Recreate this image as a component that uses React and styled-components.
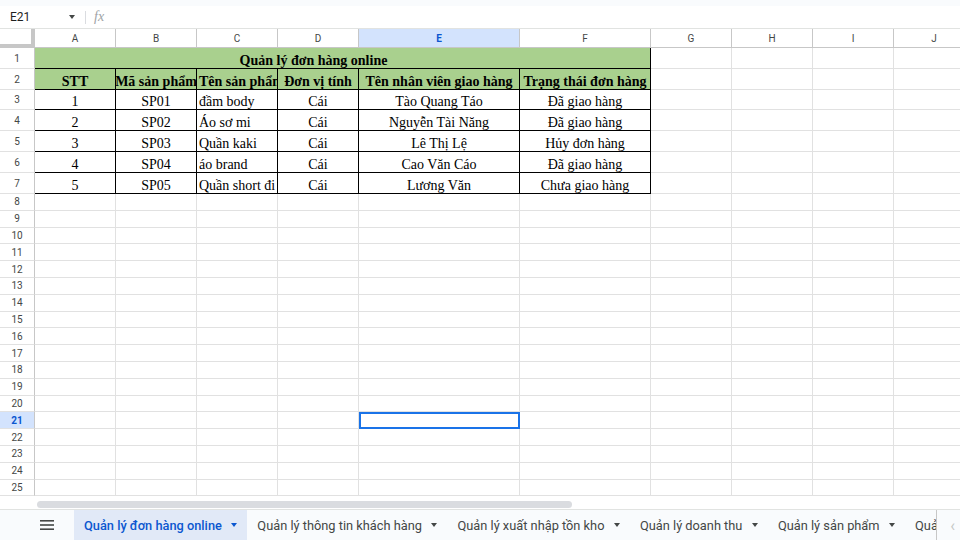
import React from "react";
import styled, { createGlobalStyle } from "styled-components";

const GlobalStyle = createGlobalStyle`
    html, body {
        margin: 0;
        padding: 0;
        background: #fff;
        font-family: Roboto, "Liberation Sans", Arial, sans-serif;
    }
`;

const Page = styled.div`
    width: 960px;
    height: 540px;
    overflow: hidden;
    display: flex;
    flex-direction: column;
    background: #fff;
`;

const TopStrip = styled.div`
    height: 6px;
    background: #f9fbfd;
`;

const FormulaBar = styled.div`
    height: 22px;
    display: flex;
    align-items: center;
    border-bottom: 1px solid #e1e3e1;
`;

const NameBox = styled.div`
    width: 85px;
    box-sizing: border-box;
    padding: 0 10px;
    display: flex;
    align-items: center;
    justify-content: space-between;
    font-size: 12px;
    color: #1f1f1f;
`;

const Caret = styled.span`
    width: 0;
    height: 0;
    border-left: 3.5px solid transparent;
    border-right: 3.5px solid transparent;
    border-top: 4px solid ${(p) => p.color || "#444746"};
    margin-left: ${(p) => p.gap || 0}px;
`;

const Divider = styled.div`
    width: 1px;
    height: 13px;
    background: #dadce0;
`;

const Fx = styled.span`
    margin-left: 8px;
    font-family: "Liberation Serif", serif;
    font-style: italic;
    font-size: 14px;
    color: #a0a3a6;
`;

const Sheet = styled.div`
    display: grid;
    grid-template-columns: 35px 81px 81px 81px 81px 161px 131px 81px 81px 81px 81px;
    grid-template-rows: 19px 21px 21px 20px 21px 21px 21px 21px repeat(18, 16.8px);
    height: 467.4px;
    overflow: hidden;
`;

const Corner = styled.div`
    box-sizing: border-box;
    background: #fff;
    border-right: 4px solid #c7c7c7;
    border-bottom: 4px solid #c7c7c7;
`;

const ColHead = styled.div`
    box-sizing: border-box;
    display: flex;
    align-items: center;
    justify-content: center;
    font-size: 10px;
    color: ${(p) => (p.active ? "#0b57d0" : "#444746")};
    font-weight: ${(p) => (p.active ? 700 : 400)};
    background: ${(p) => (p.active ? "#d3e3fd" : "#fff")};
    border-right: 1px solid #c7c7c7;
    border-bottom: 1px solid #c7c7c7;
`;

const RowHead = styled.div`
    box-sizing: border-box;
    display: flex;
    align-items: center;
    justify-content: center;
    font-size: 10px;
    color: ${(p) => (p.active ? "#0b57d0" : "#444746")};
    font-weight: ${(p) => (p.active ? 700 : 400)};
    background: ${(p) => (p.active ? "#d3e3fd" : "#fff")};
    border-right: 1px solid #c7c7c7;
    border-bottom: 1px solid #e1e1e1;
`;

const Cell = styled.div`
    box-sizing: border-box;
    display: flex;
    align-items: flex-end;
    justify-content: ${(p) => (p.align === "left" ? "flex-start" : "center")};
    padding: 0 ${(p) => (p.shift ? p.shift + 2 : 2)}px 0 2px;
    overflow: hidden;
    white-space: nowrap;
    font-family: "Liberation Serif", "Times New Roman", serif;
    font-size: 14px;
    line-height: 15px;
    font-weight: ${(p) => (p.bold ? 700 : 400)};
    color: #000;
    background: ${(p) => (p.green ? "#a9d08e" : "#fff")};
    grid-column: ${(p) => (p.span ? `span ${p.span}` : "auto")};
    border-right: 1px solid ${(p) => (p.table ? "#000" : "#e1e1e1")};
    border-bottom: 1px solid ${(p) => (p.table ? "#000" : "#e1e1e1")};
    outline: ${(p) => (p.selected ? "2px solid #1a73e8" : "none")};
    outline-offset: -2px;
`;

const ScrollTrack = styled.div`
    height: 14px;
    box-sizing: border-box;
    padding: 5px 0 0 37px;
    border-bottom: 1px solid #e1e3e1;
`;

const ScrollThumb = styled.div`
    width: 535px;
    height: 7px;
    border-radius: 4px;
    background: #dadce0;
`;

const TabBar = styled.div`
    flex: 1;
    display: flex;
    align-items: stretch;
    background: #f9fbfd;
`;

const Menu = styled.div`
    width: 74px;
    display: flex;
    align-items: center;
    justify-content: center;
    padding-left: 20px;
    box-sizing: border-box;
`;

const TabList = styled.div`
    width: 862px;
    display: flex;
    overflow: hidden;
    border-right: 1px solid #c7c7c7;
`;

const Tab = styled.div`
    flex: none;
    display: flex;
    align-items: center;
    padding: 0 10px;
    font-size: 12.8px;
    font-weight: ${(p) => (p.active ? 500 : 400)};
    color: ${(p) => (p.active ? "#0b57d0" : "#444746")};
    background: ${(p) => (p.active ? "#e1e9f7" : "transparent")};
    white-space: nowrap;
`;

const NavArrow = styled.div`
    flex: 1;
    display: flex;
    align-items: center;
    justify-content: flex-end;
    padding-right: 5px;
    color: #c4c7c5;
    font-size: 16px;
`;

const cols = ["A", "B", "C", "D", "E", "F", "G", "H", "I", "J"];

const header = ["STT", "Mã sản phẩm", "Tên sản phẩm", "Đơn vị tính", "Tên nhân viên giao hàng", "Trạng thái đơn hàng"];

const data = [
    ["1", "SP01", "đầm body", "Cái", "Tào Quang Táo", "Đã giao hàng"],
    ["2", "SP02", "Áo sơ mi", "Cái", "Nguyễn Tài Năng", "Đã giao hàng"],
    ["3", "SP03", "Quần kaki", "Cái", "Lê Thị Lệ", "Hủy đơn hàng"],
    ["4", "SP04", "áo brand", "Cái", "Cao Văn Cáo", "Đã giao hàng"],
    ["5", "SP05", "Quần short đi", "Cái", "Lương Văn", "Chưa giao hàng"],
];

const tabs = [
    "Quản lý đơn hàng online",
    "Quản lý thông tin khách hàng",
    "Quản lý xuất nhập tồn kho",
    "Quản lý doanh thu",
    "Quản lý sản phẩm",
];

const MenuIcon = () => (
    <svg width="14" height="10" viewBox="0 0 14 10">
        <rect x="0" y="0" width="14" height="1.6" fill="#444746" />
        <rect x="0" y="4.2" width="14" height="1.6" fill="#444746" />
        <rect x="0" y="8.4" width="14" height="1.6" fill="#444746" />
    </svg>
);

const App = () => {
    const rows = [];
    // row 1: title across A:F
    rows.push(
        <React.Fragment key="r1">
            <RowHead>1</RowHead>
            <Cell table green bold span={6} shift={58}>
                Quản lý đơn hàng online
            </Cell>
            {[0, 1, 2, 3].map((i) => (
                <Cell key={i} />
            ))}
        </React.Fragment>
    );
    rows.push(
        <React.Fragment key="r2">
            <RowHead>2</RowHead>
            {header.map((h, i) => (
                <Cell key={i} table green bold align={i === 2 ? "left" : "center"}>
                    {h}
                </Cell>
            ))}
            {[0, 1, 2, 3].map((i) => (
                <Cell key={"e" + i} />
            ))}
        </React.Fragment>
    );
    data.forEach((r, ri) => {
        rows.push(
            <React.Fragment key={"d" + ri}>
                <RowHead>{ri + 3}</RowHead>
                {r.map((v, i) => (
                    <Cell key={i} table align={i === 2 ? "left" : "center"}>
                        {v}
                    </Cell>
                ))}
                {[0, 1, 2, 3].map((i) => (
                    <Cell key={"e" + i} />
                ))}
            </React.Fragment>
        );
    });
    for (let n = 8; n <= 25; n++) {
        rows.push(
            <React.Fragment key={"n" + n}>
                <RowHead active={n === 21}>{n}</RowHead>
                {cols.map((c) => (
                    <Cell key={c} selected={n === 21 && c === "E"} />
                ))}
            </React.Fragment>
        );
    }

    return (
        <Page>
            <GlobalStyle />
            <TopStrip />
            <FormulaBar>
                <NameBox>
                    E21
                    <Caret />
                </NameBox>
                <Divider />
                <Fx>fx</Fx>
            </FormulaBar>
            <Sheet>
                <Corner />
                {cols.map((c) => (
                    <ColHead key={c} active={c === "E"}>
                        {c}
                    </ColHead>
                ))}
                {rows}
            </Sheet>
            <ScrollTrack>
                <ScrollThumb />
            </ScrollTrack>
            <TabBar>
                <Menu>
                    <MenuIcon />
                </Menu>
                <TabList>
                    {tabs.map((t, i) => (
                        <Tab key={t} active={i === 0}>
                            {t}
                            <Caret gap={9.5} color={i === 0 ? "#0b57d0" : "#444746"} />
                        </Tab>
                    ))}
                    <Tab>Quản lý</Tab>
                </TabList>
                <NavArrow>‹</NavArrow>
            </TabBar>
        </Page>
    );
};

export default App;
